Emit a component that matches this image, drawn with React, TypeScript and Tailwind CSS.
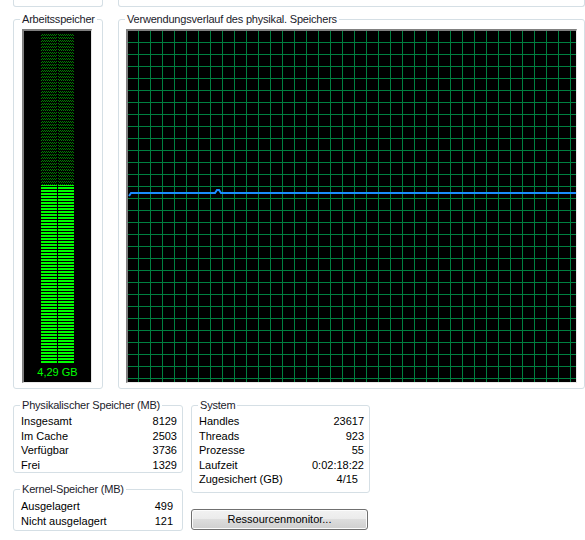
import type { ReactNode } from 'react';

const physical = [
  { label: 'Insgesamt', value: '8129' },
  { label: 'Im Cache', value: '2503' },
  { label: 'Verfügbar', value: '3736' },
  { label: 'Frei', value: '1329' },
];

const kernel = [
  { label: 'Ausgelagert', value: '499' },
  { label: 'Nicht ausgelagert', value: '121' },
];

const system = [
  { label: 'Handles', value: '23617' },
  { label: 'Threads', value: '923' },
  { label: 'Prozesse', value: '55' },
  { label: 'Laufzeit', value: '0:02:18:22' },
  { label: 'Zugesichert (GB)', value: '4/15', pad: true },
];

function Group({
  title,
  className,
  children,
}: {
  title: string;
  className: string;
  children?: ReactNode;
}) {
  return (
    <fieldset className={`border border-[#d5dfe5] rounded-[3px] ${className}`}>
      <legend className="ml-[6px] px-[2px] text-[11px] leading-[13px] tracking-[-0.2px] text-[#1b1b2b]">
        {title}
      </legend>
      {children}
    </fieldset>
  );
}

function Row({ label, value, pad }: { label: string; value: string; pad?: boolean }) {
  return (
    <div className="flex justify-between h-[14.5px] leading-[14.5px] text-[11px] text-black">
      <span>{label}</span>
      <span className={pad ? 'pr-[6px]' : ''}>{value}</span>
    </div>
  );
}

// memory meter: dim checker for free part, bright stripes for used part
function Meter() {
  const used = 154;
  return (
    <svg width="67" height="335" shapeRendering="crispEdges">
      <defs>
        <pattern id="dim" width="2" height="3" patternUnits="userSpaceOnUse">
          <rect x="0" y="0" width="1" height="1" fill="#008000" />
          <rect x="1" y="1" width="1" height="1" fill="#008000" />
        </pattern>
        <pattern id="lit" width="2" height="3" patternUnits="userSpaceOnUse">
          <rect x="0" y="0" width="2" height="2" fill="#00ff00" />
        </pattern>
      </defs>
      {[17, 34].map((x) => (
        <g key={x}>
          <rect x={x} y={3} width={16} height={used - 3} fill="url(#dim)" />
          <rect x={x} y={used} width={16} height={332 - used} fill="url(#lit)" />
        </g>
      ))}
    </svg>
  );
}

function History() {
  const w = 448;
  const h = 351;
  const cols = [];
  for (let x = 10; x < w; x += 12) cols.push(x);
  const rows = [];
  for (let y = 11; y < h; y += 12) rows.push(y);
  return (
    <svg width={w} height={h}>
      {cols.map((x) => (
        <line key={`c${x}`} x1={x + 0.5} y1={0} x2={x + 0.5} y2={h} stroke="#008040" strokeWidth="1" />
      ))}
      {rows.map((y) => (
        <line key={`r${y}`} x1={0} y1={y + 0.5} x2={w} y2={y + 0.5} stroke="#008040" strokeWidth="1" />
      ))}
      <polyline
        points="1,165 3,162 87,162 89,159 91,159 93,162 448,162"
        fill="none"
        stroke="#1a8cff"
        strokeWidth="2"
      />
    </svg>
  );
}

export default function App() {
  return (
    <div className="w-[585px] h-[540px] overflow-hidden bg-white font-['Liberation_Sans',Arial,sans-serif]">
      {/* tails of the group boxes above */}
      <div className="flex pl-[13px] gap-[15px]">
        <div className="w-[90px] h-[7px] border-x border-b border-[#d5dfe5] rounded-b-[3px]" />
        <div className="w-[470px] h-[7px] border-x border-b border-[#d5dfe5] rounded-b-[3px]" />
      </div>

      <div className="flex pl-[13px] gap-[15px] mt-[6px]">
        <Group title="Arbeitsspeicher" className="w-[90px] h-[376px]">
          <div className="ml-[8px] mt-[3px] w-[70px] h-[354px] bg-black border-t-2 border-l-2 border-t-[#808080] border-l-[#808080] border-r border-b border-r-[#e8e8e8] border-b-[#e8e8e8] flex flex-col">
            <Meter />
            <div className="text-center text-[11px] leading-[13px] text-[#00ff00]">4,29 GB</div>
          </div>
        </Group>
        <Group title="Verwendungsverlauf des physikal. Speichers" className="w-[467px] h-[376px]">
          <div className="ml-[7px] mt-[3px] w-[451px] h-[354px] bg-black border-t-2 border-l-2 border-t-[#808080] border-l-[#808080] border-r border-b border-r-[#e8e8e8] border-b-[#e8e8e8]">
            <History />
          </div>
        </Group>
      </div>

      <div className="flex pl-[13px] gap-[8px] mt-[10px]">
        <div className="flex flex-col gap-[10px] w-[170px]">
          <Group title="Physikalischer Speicher (MB)" className="h-[74px]">
            <div className="mt-[2px] pl-[7px] pr-[5px]">
              {physical.map((r) => (
                <Row key={r.label} {...r} />
              ))}
            </div>
          </Group>
          <Group title="Kernel-Speicher (MB)" className="h-[48px]">
            <div className="mt-[3px] pl-[7px] pr-[9px]">
              {kernel.map((r) => (
                <Row key={r.label} {...r} />
              ))}
            </div>
          </Group>
        </div>
        <div className="flex flex-col w-[179px]">
          <Group title="System" className="h-[94px]">
            <div className="mt-[2px] pl-[7px] pr-[5px]">
              {system.map((r) => (
                <Row key={r.label} {...r} />
              ))}
            </div>
          </Group>
          <button className="mt-[16px] w-[177px] h-[21px] border border-[#707070] rounded-[3px] bg-[linear-gradient(#f2f2f2_0%,#ebebeb_50%,#dddddd_50%,#cfcfcf_100%)] shadow-[inset_0_0_0_1px_#fcfcfc] text-[11px] text-black">
            Ressourcenmonitor...
          </button>
        </div>
      </div>
    </div>
  );
}
